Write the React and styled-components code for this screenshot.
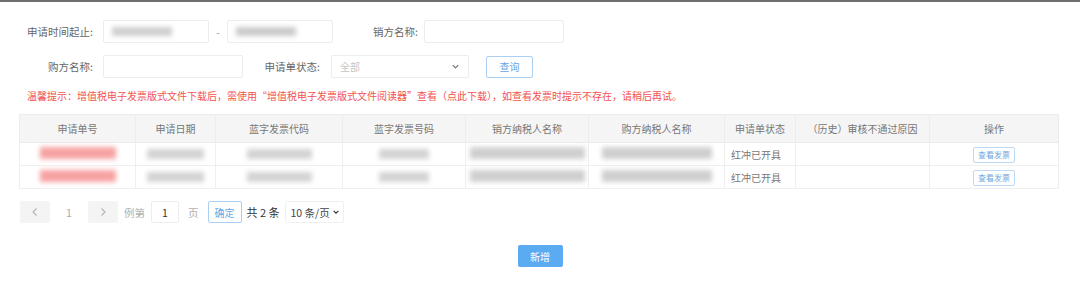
import React from "react";
import styled, { createGlobalStyle } from "styled-components";

const Global = createGlobalStyle`
  html, body { margin: 0; padding: 0; background: #fff; }
  body {
    font-family: "Noto Sans CJK SC", "Noto Sans", "Liberation Sans", sans-serif;
    color: #555;
    border-top: 2px solid #6e6e6e;
  }
  * { box-sizing: border-box; }
`;

const Page = styled.div`
  width: 1080px;
  height: 292px;
  padding: 18px 22px 0 20px;
  display: flex;
  flex-direction: column;
`;

const Row = styled.div`
  display: flex;
  align-items: center;
  height: 23px;
  margin-bottom: ${(p) => p.$mb || 0}px;
`;

const Label = styled.span`
  width: ${(p) => p.$w}px;
  margin-right: ${(p) => p.$mr || 10}px;
  text-align: right;
  font-size: 10.5px;
  color: #666;
  white-space: nowrap;
`;

const Input = styled.div`
  width: ${(p) => p.$w}px;
  height: 23px;
  border: 1px solid #ededed;
  border-radius: 2px;
  background: #fff;
  display: flex;
  align-items: center;
  padding-left: ${(p) => p.$pl || 6}px;
`;

const Blur = styled.span`
  display: inline-block;
  width: ${(p) => p.$w}px;
  height: ${(p) => p.$h || 10}px;
  margin-left: ${(p) => p.$ml || 0}px;
  background: ${(p) => p.$c || "#d3d3d3"};
  filter: blur(2.5px);
  opacity: ${(p) => p.$o || 1};
`;

const Dash = styled.span`
  width: 18px;
  text-align: center;
  font-size: 10px;
  color: #999;
`;

const Select = styled.div`
  width: ${(p) => p.$w}px;
  height: 23px;
  border: 1px solid #ededed;
  border-radius: 2px;
  display: flex;
  align-items: center;
  justify-content: space-between;
  padding: 0 8px 0 8px;
  font-size: 10px;
  color: ${(p) => p.$color || "#c6c6c6"};
`;

const QueryButton = styled.button`
  margin-left: 17px;
  width: 47px;
  height: 22px;
  border: 1px solid #a9cff2;
  border-radius: 2px;
  background: #fff;
  color: #6aa6e6;
  font-family: inherit;
  font-size: 10px;
  padding: 0;
`;

const Warning = styled.div`
  margin-top: 11px;
  padding-left: 7px;
  font-size: 10px;
  line-height: 14px;
  color: #f2524f;
  white-space: nowrap;
`;

const Table = styled.table`
  margin-top: 11px;
  margin-left: -1px;
  border-collapse: collapse;
  table-layout: fixed;
  width: 1039px;
  font-size: 10px;
  color: #777;
  border: 1px solid #ececec;
`;

const Th = styled.th`
  height: 28px;
  background: #f5f5f5;
  font-weight: normal;
  border: 1px solid #ececec;
  text-align: center;
  padding: 0;
`;

const Td = styled.td`
  height: 23px;
  border: 1px solid #efefef;
  padding: 0 ${(p) => (p.$left ? "6px" : "0")};
  text-align: ${(p) => (p.$left ? "left" : "center")};
  white-space: nowrap;
`;

const SmallButton = styled.button`
  width: 42px;
  height: 16px;
  border: 1px solid #bcd9f5;
  border-radius: 2px;
  background: #fff;
  color: #6fa7e0;
  font-family: inherit;
  font-size: 8px;
  padding: 0;
  line-height: 14px;
`;

const Pager = styled.div`
  margin-top: 12px;
  display: flex;
  align-items: center;
  height: 22px;
  font-size: 10.5px;
  color: #999;
`;

const PageNav = styled.div`
  width: 30px;
  height: 22px;
  background: #f4f4f5;
  border-radius: 2px;
  display: flex;
  align-items: center;
  justify-content: center;
`;

const PageNum = styled.span`
  width: 38px;
  text-align: center;
  color: #aaa;
`;

const PagerText = styled.span`
  margin: 0 ${(p) => p.$mx || 0}px;
  color: ${(p) => p.$color || "#b0b0b0"};
  font-size: ${(p) => p.$fs || 10.5}px;
  white-space: nowrap;
`;

const PagerInput = styled.div`
  width: 28px;
  height: 22px;
  border: 1px solid #ededed;
  border-radius: 2px;
  display: flex;
  align-items: center;
  justify-content: center;
  color: #333;
  font-size: 10.5px;
`;

const ConfirmButton = styled.button`
  width: 34px;
  height: 22px;
  border: 1px solid #a9cff2;
  border-radius: 2px;
  background: #fff;
  color: #6aa6e6;
  font-family: inherit;
  font-size: 10px;
  padding: 0;
`;

const SizeSelect = styled.div`
  width: 59px;
  height: 22px;
  border: 1px solid #f0f0f0;
  border-radius: 2px;
  display: flex;
  align-items: center;
  justify-content: space-between;
  padding: 0 3px 0 5px;
  color: #444;
  font-size: 10.5px;
  white-space: nowrap;
`;

const Footer = styled.div`
  margin-top: 22px;
  display: flex;
  justify-content: center;
  padding-left: 2px;
`;

const AddButton = styled.button`
  width: 45px;
  height: 22px;
  background: #5aabf2;
  border: none;
  border-radius: 2px;
  color: #fff;
  font-family: inherit;
  font-size: 10px;
  padding: 0;
`;

const Chevron = ({ size = 9, color = "#777" }) => (
  <svg width={size} height={size} viewBox="0 0 10 10">
    <path d="M2 3.5 L5 6.5 L8 3.5" fill="none" stroke={color} strokeWidth="1.4" />
  </svg>
);

const Arrow = ({ dir }) => (
  <svg width="8" height="10" viewBox="0 0 8 10">
    <path
      d={dir === "left" ? "M5.5 1.5 L2 5 L5.5 8.5" : "M2.5 1.5 L6 5 L2.5 8.5"}
      fill="none"
      stroke="#b0b0b0"
      strokeWidth="1.1"
    />
  </svg>
);

const cols = [116, 80, 127, 123, 123, 136, 71, 134, 129];
const headers = [
  "申请单号",
  "申请日期",
  "蓝字发票代码",
  "蓝字发票号码",
  "销方纳税人名称",
  "购方纳税人名称",
  "申请单状态",
  "（历史）审核不通过原因",
  "操作",
];

const rows = [
  { a: 76, b: 57, c: 65, d: 50, e: 115, f: 110 },
  { a: 76, b: 57, c: 65, d: 50, e: 115, f: 110 },
];

export default function App() {
  return (
    <>
      <Global />
      <Page>
        <Row $mb={12}>
          <Label $w={73}>申请时间起止:</Label>
          <Input $w={106} $pl={8}>
            <Blur $w={60} $h={9} $c="#cfcfcf" />
          </Input>
          <Dash>-</Dash>
          <Input $w={106} $pl={8}>
            <Blur $w={60} $h={9} $c="#cacaca" />
          </Input>
          <Label $w={85} $mr={6}>销方名称:</Label>
          <Input $w={140} />
        </Row>
        <Row>
          <Label $w={73}>购方名称:</Label>
          <Input $w={140} />
          <Label $w={77} $mr={11}>申请单状态:</Label>
          <Select $w={138}>
            <span>全部</span>
            <Chevron />
          </Select>
          <QueryButton>查询</QueryButton>
        </Row>
        <Warning>
          温馨提示：增值税电子发票版式文件下载后，需使用“增值税电子发票版式文件阅读器”查看（点此下载），如查看发票时提示不存在，请稍后再试。
        </Warning>
        <Table>
          <colgroup>
            {cols.map((w, i) => (
              <col key={i} style={{ width: w }} />
            ))}
          </colgroup>
          <thead>
            <tr>
              {headers.map((h) => (
                <Th key={h}>{h}</Th>
              ))}
            </tr>
          </thead>
          <tbody>
            {rows.map((r, i) => (
              <tr key={i}>
                <Td>
                  <Blur $w={r.a} $h={12} $c="#f58a8a" $o={0.8} />
                </Td>
                <Td>
                  <Blur $w={r.b} $h={10} />
                </Td>
                <Td>
                  <Blur $w={r.c} $h={10} />
                </Td>
                <Td>
                  <Blur $w={r.d} $h={10} />
                </Td>
                <Td>
                  <Blur $w={r.e} $h={12} $c="#cfcfcf" />
                </Td>
                <Td>
                  <Blur $w={r.f} $h={12} $c="#cfcfcf" />
                </Td>
                <Td $left>红冲已开具</Td>
                <Td />
                <Td>
                  <SmallButton>查看发票</SmallButton>
                </Td>
              </tr>
            ))}
          </tbody>
        </Table>
        <Pager>
          <PageNav>
            <Arrow dir="left" />
          </PageNav>
          <PageNum>1</PageNum>
          <PageNav>
            <Arrow dir="right" />
          </PageNav>
          <PagerText $mx={6}>例第</PagerText>
          <PagerInput>1</PagerInput>
          <PagerText $mx={9}>页</PagerText>
          <ConfirmButton>确定</ConfirmButton>
          <PagerText $mx={5} $color="#333" $fs={11}>共 2 条</PagerText>
          <SizeSelect>
            <span>10 条/页</span>
            <Chevron size={8} color="#333" />
          </SizeSelect>
        </Pager>
        <Footer>
          <AddButton>新增</AddButton>
        </Footer>
      </Page>
    </>
  );
}
